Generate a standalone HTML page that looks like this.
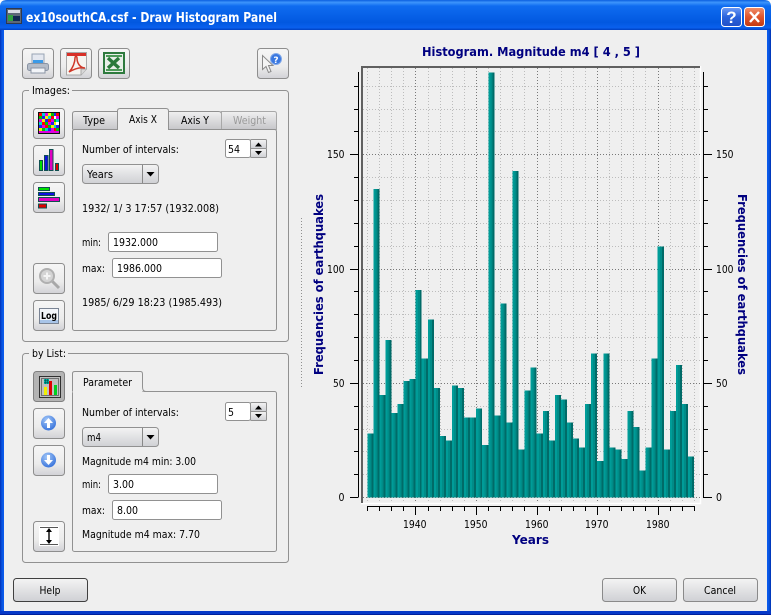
<!DOCTYPE html>
<html><head><meta charset="utf-8"><title>Draw Histogram Panel</title>
<style>
html,body{margin:0;padding:0;background:#fff;width:771px;height:615px;overflow:hidden}
svg{display:block}
text{font-family:"DejaVu Sans","Liberation Sans",sans-serif;font-size:11px;fill:#000}
.t{font-weight:bold;fill:#000080;font-size:12.5px}
.c{text-anchor:middle}
.e{text-anchor:end}
</style></head><body>
<svg width="771" height="615" viewBox="0 0 771 615" xmlns="http://www.w3.org/2000/svg">
<defs>
<linearGradient id="tb" x1="0" y1="0" x2="0" y2="1">
<stop offset="0" stop-color="#0a5fe0"/><stop offset=".08" stop-color="#3d95fb"/><stop offset=".2" stop-color="#0f6cf0"/><stop offset=".75" stop-color="#0258e0"/><stop offset=".92" stop-color="#0a60ee"/><stop offset="1" stop-color="#0040c0"/>
</linearGradient>
<linearGradient id="lf" x1="0" y1="0" x2="1" y2="0"><stop offset="0" stop-color="#0030b8"/><stop offset=".5" stop-color="#0855e0"/><stop offset="1" stop-color="#0a5cf0"/></linearGradient>
<linearGradient id="rf" x1="0" y1="0" x2="1" y2="0"><stop offset="0" stop-color="#0a5cf0"/><stop offset=".5" stop-color="#0855e0"/><stop offset="1" stop-color="#0030b0"/></linearGradient>
<linearGradient id="btn" x1="0" y1="0" x2="0" y2="1"><stop offset="0" stop-color="#f6f6f6"/><stop offset=".6" stop-color="#ececec"/><stop offset="1" stop-color="#d2d2d6"/></linearGradient>
<linearGradient id="bt2" x1="0" y1="0" x2="0" y2="1"><stop offset="0" stop-color="#f4f4f4"/><stop offset="1" stop-color="#cfd0d4"/></linearGradient>
<linearGradient id="tab" x1="0" y1="0" x2="0" y2="1"><stop offset="0" stop-color="#f0f0f0"/><stop offset="1" stop-color="#c6c6ca"/></linearGradient>
<linearGradient id="bar" x1="0" y1="0" x2="1" y2="0">
<stop offset="0" stop-color="#009c98"/><stop offset=".34" stop-color="#009c98"/><stop offset=".34" stop-color="#008c88"/><stop offset=".67" stop-color="#008c88"/><stop offset=".67" stop-color="#006b68"/><stop offset="1" stop-color="#006b68"/>
</linearGradient>
<linearGradient id="hb" x1="0" y1="0" x2="0" y2="1"><stop offset="0" stop-color="#6f9cf6"/><stop offset=".5" stop-color="#2a63dc"/><stop offset="1" stop-color="#2050c8"/></linearGradient>
<linearGradient id="cb" x1="0" y1="0" x2="0" y2="1"><stop offset="0" stop-color="#f0906c"/><stop offset=".5" stop-color="#e0552c"/><stop offset="1" stop-color="#c03810"/></linearGradient>
<radialGradient id="ball" cx=".4" cy=".3" r=".8"><stop offset="0" stop-color="#a4c8f8"/><stop offset="1" stop-color="#2c6ad8"/></radialGradient>
</defs>

<!-- window -->
<rect width="771" height="615" fill="#efefef"/>
<path d="M0 30V6Q0 0 7 0H764Q771 0 771 6V30Z" fill="url(#tb)"/>
<path d="M0 0H5Q1 0 0 5ZM771 0H766Q770 0 771 5Z" fill="#fff"/>
<rect x="0" y="30" width="4" height="585" fill="url(#lf)"/>
<rect x="767" y="30" width="4" height="585" fill="url(#rf)"/>
<rect x="0" y="611" width="771" height="4" fill="#0639c8"/>
<rect x="0" y="614" width="771" height="1" fill="#00209c"/>

<!-- title icon -->
<rect x="6.500" y="8.500" width="15" height="15" fill="#5c6878" stroke="#30384c"/>
<rect x="8" y="10" width="12" height="3" fill="#d8dce4"/>
<rect x="8" y="15" width="5" height="6" fill="#30a040"/>
<rect x="13" y="16" width="7" height="5" fill="#102850"/>
<text x="26" y="22" style="font-size:13.500px;font-weight:bold;fill:#fff" textLength="251" lengthAdjust="spacingAndGlyphs">ex10southCA.csf - Draw Histogram Panel</text>

<!-- caption buttons -->
<rect x="721.500" y="7.500" width="20" height="19" rx="3" fill="url(#hb)" stroke="#fff"/>
<text x="731.500" y="23" class="c" style="font-size:17px;font-weight:bold;fill:#fff;font-family:'Liberation Sans',sans-serif">?</text>
<rect x="744.500" y="7.500" width="20" height="19" rx="3" fill="url(#cb)" stroke="#fff"/>
<path d="M750 12L759 22M759 12L750 22" stroke="#fff" stroke-width="2.400" fill="none"/>

<!-- top toolbar -->
<g fill="url(#btn)" stroke="#8e8e8e">
<rect x="22.500" y="48.500" width="31" height="30" rx="3"/>
<rect x="60.500" y="48.500" width="31" height="30" rx="3"/>
<rect x="98.500" y="48.500" width="31" height="30" rx="3"/>
<rect x="257.500" y="48.500" width="31" height="30" rx="3"/>
</g>
<!-- printer -->
<rect x="32" y="54" width="12" height="9" fill="#e4e8f0" stroke="#98a4b4"/>
<rect x="33" y="60" width="10" height="4" fill="#3a9ae8"/>
<rect x="27.500" y="63.500" width="21" height="7" rx="2" fill="#b4bcc8" stroke="#8a94a4"/>
<rect x="31" y="68" width="14" height="5" fill="#f2f4f8" stroke="#8a94a4"/>
<!-- pdf -->
<path d="M66.500 52.500H86.500V69L81 75H66.500Z" fill="#f6f4f0" stroke="#a8a8a8"/>
<rect x="67" y="53" width="19" height="3" fill="#d83028"/>
<path d="M81 75V69H86.500" fill="#d8d8d8" stroke="#a8a8a8"/>
<path d="M69 72C73 68 75 62 75 58C75 56 77 56 77 58C77 63 80 68 85 68C80 67 74 69 69 72Z" fill="none" stroke="#d03828" stroke-width="1.500"/>
<!-- excel -->
<rect x="104" y="53" width="20" height="20" fill="#e8efe8" stroke="#2e7a3e" stroke-width="2"/>
<rect x="106" y="55" width="16" height="2" fill="#4c9a58"/>
<rect x="106" y="69" width="16" height="2" fill="#4c9a58"/>
<path d="M108 58L119 68M119 58L108 68" stroke="#2a7a3a" stroke-width="3.400" fill="none"/>
<!-- help cursor -->
<path d="M262.500 55.500V69.500L266 66.500L268.500 72.500L271 71.500L268.500 65.500H273Z" fill="#f4f4f4" stroke="#8a8a8a"/>
<circle cx="276" cy="59" r="5.500" fill="#3a78e0" stroke="#80a8e8"/>
<text x="276" y="63" class="c" style="font-size:9px;font-weight:bold;fill:#fff">?</text>

<!-- group: images -->
<rect x="22.500" y="90.500" width="266" height="251" rx="3" fill="none" stroke="#919191"/>
<rect x="29" y="85" width="43" height="10" fill="#efefef"/>
<text x="32" y="94" textLength="38" lengthAdjust="spacingAndGlyphs">Images:</text>

<g fill="url(#btn)" stroke="#8e8e8e">
<rect x="33.500" y="108.500" width="31" height="30" rx="3"/>
<rect x="33.500" y="145.500" width="31" height="30" rx="3"/>
<rect x="33.500" y="182.500" width="31" height="30" rx="3"/>
<rect x="33.500" y="263.500" width="31" height="30" rx="3"/>
<rect x="33.500" y="300.500" width="31" height="30" rx="3"/>
</g>
<!-- checker icon -->
<rect x="38" y="112" width="22" height="22" fill="#101010"/>
<g shape-rendering="crispEdges">
<rect x="39" y="113" width="3" height="3" fill="#f00"/><rect x="42" y="113" width="3" height="3" fill="#00d0d0"/><rect x="45" y="113" width="3" height="3" fill="#e000e0"/><rect x="48" y="113" width="3" height="3" fill="#f0f000"/><rect x="51" y="113" width="3" height="3" fill="#00c000"/><rect x="54" y="113" width="2" height="3" fill="#2020f0"/><rect x="56" y="113" width="3" height="3" fill="#f00"/>
<rect x="39" y="116" width="3" height="3" fill="#00c000"/><rect x="42" y="116" width="3" height="3" fill="#2020f0"/><rect x="45" y="116" width="3" height="3" fill="#f0f000"/><rect x="48" y="116" width="3" height="3" fill="#00d0d0"/><rect x="51" y="116" width="3" height="3" fill="#f00"/><rect x="54" y="116" width="2" height="3" fill="#fff"/><rect x="56" y="116" width="3" height="3" fill="#e000e0"/>
<rect x="39" y="119" width="3" height="3" fill="#e000e0"/><rect x="42" y="119" width="3" height="3" fill="#f0f000"/><rect x="45" y="119" width="3" height="3" fill="#2020f0"/><rect x="48" y="119" width="3" height="3" fill="#f00"/><rect x="51" y="119" width="3" height="3" fill="#e000e0"/><rect x="54" y="119" width="2" height="3" fill="#00c000"/><rect x="56" y="119" width="3" height="3" fill="#00d0d0"/>
<rect x="39" y="122" width="3" height="3" fill="#00d0d0"/><rect x="42" y="122" width="3" height="3" fill="#f00"/><rect x="45" y="122" width="3" height="3" fill="#00c000"/><rect x="48" y="122" width="3" height="3" fill="#e000e0"/><rect x="51" y="122" width="3" height="3" fill="#2020f0"/><rect x="54" y="122" width="2" height="3" fill="#f0f000"/><rect x="56" y="122" width="3" height="3" fill="#fff"/>
<rect x="39" y="125" width="3" height="3" fill="#2020f0"/><rect x="42" y="125" width="3" height="3" fill="#e000e0"/><rect x="45" y="125" width="3" height="3" fill="#f00"/><rect x="48" y="125" width="3" height="3" fill="#00c000"/><rect x="51" y="125" width="3" height="3" fill="#f0f000"/><rect x="54" y="125" width="2" height="3" fill="#00d0d0"/><rect x="56" y="125" width="3" height="3" fill="#2020f0"/>
<rect x="39" y="128" width="3" height="3" fill="#f0f000"/><rect x="42" y="128" width="3" height="3" fill="#00c000"/><rect x="45" y="128" width="3" height="3" fill="#00d0d0"/><rect x="48" y="128" width="3" height="3" fill="#2020f0"/><rect x="51" y="128" width="3" height="3" fill="#e000e0"/><rect x="54" y="128" width="2" height="3" fill="#f00"/><rect x="56" y="128" width="3" height="3" fill="#00c000"/>
<rect x="39" y="131" width="20" height="2" fill="#e000e0"/>
</g>
<!-- bar chart icon -->
<g stroke="#105050" stroke-width="1">
<rect x="39.500" y="160.500" width="3" height="10" fill="#00e000"/>
<rect x="44.500" y="155.500" width="3.500" height="15" fill="#1010e0"/>
<rect x="49.500" y="149.500" width="3.500" height="21" fill="#e000c0"/>
<rect x="55.500" y="163.500" width="3" height="7" fill="#e00000"/>
</g>
<!-- hbar icon -->
<g stroke="#105050" stroke-width="1" shape-rendering="crispEdges">
<rect x="38.500" y="187.500" width="11" height="3" fill="#00e000"/>
<rect x="38.500" y="192.500" width="16" height="3" fill="#1010e0"/>
<rect x="38.500" y="197.500" width="21" height="4" fill="#e000c0"/>
<rect x="38.500" y="204" width="8" height="4" fill="#e00000"/>
</g>
<!-- magnifier -->
<path d="M52 281L59 288" stroke="#a8a8a8" stroke-width="3"/>
<circle cx="47" cy="276" r="7" fill="#d4d4d4" stroke="#b0b0b0" stroke-width="2"/>
<path d="M43.500 276H50.500M47 272.500V279.500" stroke="#f4f4f4" stroke-width="2"/>
<!-- log -->
<rect x="39.500" y="308.500" width="19" height="15" fill="#f4f6fa" stroke="#7a8494"/>
<rect x="40" y="320" width="18" height="3" fill="#a8c4e8"/>
<text x="49" y="319" class="c" style="font-size:9.500px;font-weight:bold" textLength="16" lengthAdjust="spacingAndGlyphs">Log</text>

<!-- tabs images -->
<path d="M72.500 129.500V114Q72.500 111.500 75 111.500H118V129.500" fill="url(#tab)" stroke="#919191"/>
<path d="M168 111.500H218.500Q221.500 111.500 221.500 114V129.500H168Z" fill="url(#tab)" stroke="#919191"/>
<path d="M221.500 111.500H274.500Q276.500 111.500 276.500 114V129.500H221.500Z" fill="url(#tab)" stroke="#a8a8a8"/>
<rect x="72.500" y="129.500" width="204" height="201" rx="2" fill="#efefef" stroke="#919191"/>
<path d="M117.500 129.500V111Q117.500 108.500 120 108.500H166Q168.500 108.500 168.500 111V129" fill="#efefef" stroke="#919191"/>
<rect x="118" y="128" width="50" height="3" fill="#efefef"/>
<text x="83" y="124" textLength="22" lengthAdjust="spacingAndGlyphs">Type</text>
<text x="129" y="123" textLength="28" lengthAdjust="spacingAndGlyphs">Axis X</text>
<text x="181" y="124" textLength="28" lengthAdjust="spacingAndGlyphs">Axis Y</text>
<text x="233" y="124" style="fill:#9a9a9a" textLength="33" lengthAdjust="spacingAndGlyphs">Weight</text>

<text x="82" y="153" textLength="97" lengthAdjust="spacingAndGlyphs">Number of intervals:</text>
<!-- spin 54 -->
<rect x="225.500" y="139.500" width="25" height="18" rx="2" fill="#fff" stroke="#919191"/>
<text x="228" y="153" textLength="12" lengthAdjust="spacingAndGlyphs">54</text>
<rect x="250.500" y="139.500" width="16" height="9" rx="1" fill="url(#bt2)" stroke="#919191"/>
<rect x="250.500" y="148.500" width="16" height="9" rx="1" fill="url(#bt2)" stroke="#919191"/>
<path d="M255 146.500L258.500 142.500L262 146.500ZM255 151L258.500 155L262 151Z" fill="#000"/>
<!-- combo years -->
<rect x="82.500" y="164.500" width="76" height="19" rx="3" fill="url(#bt2)" stroke="#919191"/>
<path d="M142.500 165V183" stroke="#888"/>
<path d="M146.500 172H154.500L150.500 176.500Z" fill="#000"/>
<text x="87" y="178" textLength="26" lengthAdjust="spacingAndGlyphs">Years</text>

<text x="82" y="212" textLength="137" lengthAdjust="spacingAndGlyphs" xml:space="preserve">1932/ 1/ 3 17:57 (1932.008)</text>
<text x="82" y="246" textLength="19" lengthAdjust="spacingAndGlyphs">min:</text>
<rect x="108.500" y="232.500" width="109" height="19" rx="2" fill="#fff" stroke="#919191"/>
<text x="113" y="246" textLength="45" lengthAdjust="spacingAndGlyphs">1932.000</text>
<text x="82" y="272" textLength="23" lengthAdjust="spacingAndGlyphs">max:</text>
<rect x="112.500" y="258.500" width="109" height="19" rx="2" fill="#fff" stroke="#919191"/>
<text x="117" y="272" textLength="45" lengthAdjust="spacingAndGlyphs">1986.000</text>
<text x="82" y="306" textLength="140" lengthAdjust="spacingAndGlyphs">1985/ 6/29 18:23 (1985.493)</text>

<!-- group: by list -->
<rect x="22.500" y="353.500" width="266" height="209" rx="3" fill="none" stroke="#919191"/>
<rect x="29" y="348" width="39" height="10" fill="#efefef"/>
<text x="32" y="357" textLength="34" lengthAdjust="spacingAndGlyphs">by List:</text>

<rect x="33.500" y="371.500" width="31" height="30" rx="3" fill="#b4b4b4" stroke="#808080"/>
<g fill="url(#btn)" stroke="#8e8e8e">
<rect x="33.500" y="408.500" width="31" height="30" rx="3"/>
<rect x="33.500" y="445.500" width="31" height="30" rx="3"/>
<rect x="33.500" y="521.500" width="31" height="30" rx="3"/>
</g>
<!-- pressed chart icon -->
<rect x="39.500" y="376.500" width="21" height="21" fill="#c0c0c0" stroke="#303030"/>
<rect x="41.500" y="378.500" width="17" height="17" fill="none" stroke="#707070"/>
<rect x="44" y="379" width="5" height="5" fill="#00b8a8"/>
<path d="M45.500 379V384M47.500 379V384M44 380.500H49M44 382.500H49" stroke="#005050" stroke-width=".6"/>
<rect x="44" y="387" width="3" height="8" fill="#f0f000"/>
<rect x="49" y="381" width="3" height="14" fill="#e00000"/>
<rect x="54" y="385" width="3" height="10" fill="#00d020"/>
<!-- arrows -->
<circle cx="48.500" cy="423" r="7.500" fill="url(#ball)"/>
<path d="M48.500 418L44 423H47V428H50V423H53Z" fill="#fff"/>
<circle cx="48.500" cy="460" r="7.500" fill="url(#ball)"/>
<path d="M48.500 465L44 460H47V455H50V460H53Z" fill="#fff"/>
<!-- extent icon -->
<rect x="39" y="526" width="20" height="20" fill="#fff"/>
<path d="M40 527.500H58M40 544.500H58" stroke="#555"/>
<path d="M49 529V543" stroke="#000" stroke-width="1.400"/>
<path d="M46 532L49 528L52 532ZM46 540L49 544L52 540Z" fill="#000"/>

<rect x="72.500" y="391.500" width="204" height="160" rx="2" fill="#efefef" stroke="#919191"/>
<path d="M72.500 391.500V373.500Q72.500 371.500 75 371.500H140.500Q142.500 371.500 142.500 374V387Q142.500 391.500 146 391.500" fill="#efefef" stroke="#919191"/>
<rect x="73" y="389" width="69" height="4" fill="#efefef"/>
<text x="83" y="386" textLength="49" lengthAdjust="spacingAndGlyphs">Parameter</text>

<text x="82" y="416" textLength="97" lengthAdjust="spacingAndGlyphs">Number of intervals:</text>
<rect x="225.500" y="402.500" width="25" height="18" rx="2" fill="#fff" stroke="#919191"/>
<text x="228" y="416" textLength="6" lengthAdjust="spacingAndGlyphs">5</text>
<rect x="250.500" y="402.500" width="16" height="9" rx="1" fill="url(#bt2)" stroke="#919191"/>
<rect x="250.500" y="411.500" width="16" height="9" rx="1" fill="url(#bt2)" stroke="#919191"/>
<path d="M255 409.500L258.500 405.500L262 409.500ZM255 414L258.500 418L262 414Z" fill="#000"/>
<rect x="82.500" y="427.500" width="76" height="19" rx="3" fill="url(#bt2)" stroke="#919191"/>
<path d="M142.500 428V446" stroke="#888"/>
<path d="M146.500 435H154.500L150.500 439.500Z" fill="#000"/>
<text x="87" y="441" textLength="14" lengthAdjust="spacingAndGlyphs">m4</text>

<text x="82" y="465" textLength="114" lengthAdjust="spacingAndGlyphs">Magnitude m4 min: 3.00</text>
<text x="82" y="488" textLength="19" lengthAdjust="spacingAndGlyphs">min:</text>
<rect x="108.500" y="474.500" width="109" height="19" rx="2" fill="#fff" stroke="#919191"/>
<text x="113" y="488" textLength="21" lengthAdjust="spacingAndGlyphs">3.00</text>
<text x="82" y="514" textLength="23" lengthAdjust="spacingAndGlyphs">max:</text>
<rect x="112.500" y="500.500" width="109" height="19" rx="2" fill="#fff" stroke="#919191"/>
<text x="117" y="514" textLength="21" lengthAdjust="spacingAndGlyphs">8.00</text>
<text x="82" y="538" textLength="118" lengthAdjust="spacingAndGlyphs">Magnitude m4 max: 7.70</text>

<!-- dialog buttons -->
<rect x="13.500" y="578.500" width="74" height="23" rx="3" fill="url(#bt2)" stroke="#404040"/>
<text x="39.500" y="594" textLength="21" lengthAdjust="spacingAndGlyphs">Help</text>
<rect x="602.500" y="578.500" width="74" height="23" rx="3" fill="url(#bt2)" stroke="#8a8a8a"/>
<text x="633" y="594" textLength="13" lengthAdjust="spacingAndGlyphs">OK</text>
<rect x="683.500" y="578.500" width="74" height="23" rx="3" fill="url(#bt2)" stroke="#8a8a8a"/>
<text x="704" y="594" textLength="32" lengthAdjust="spacingAndGlyphs">Cancel</text>

<!-- splitter -->
<path d="M301.500 218V388" stroke="#909090" stroke-dasharray="1 2"/>

<!-- plot -->
<text x="422" y="56" class="t" textLength="218" lengthAdjust="spacingAndGlyphs" xml:space="preserve">Histogram. Magnitude m4 [ 4 , 5 ]</text>

<rect x="363" y="68" width="337" height="435" fill="#efefef"/>
<path d="M700.500 66V503.500H361" stroke="#fff" fill="none" stroke-width="1.500"/>
<!-- grid minor -->
<path stroke="#bcbcbc" stroke-dasharray="1 2" fill="none" d="M363 474.500H700M363 451.500H700M363 429.500H700M363 406.500H700M363 360.500H700M363 337.500H700M363 314.500H700M363 291.500H700M363 246.500H700M363 223.500H700M363 200.500H700M363 177.500H700M363 131.500H700M363 109.500H700M363 86.500H700M367.500 68V503M379.500 68V503M391.500 68V503M403.500 68V503M428.500 68V503M440.500 68V503M452.500 68V503M464.500 68V503M488.500 68V503M500.500 68V503M512.500 68V503M524.500 68V503M549.500 68V503M561.500 68V503M573.500 68V503M585.500 68V503M609.500 68V503M621.500 68V503M633.500 68V503M645.500 68V503M670.500 68V503M682.500 68V503M694.500 68V503"/>
<!-- grid major -->
<path stroke="#787878" stroke-dasharray="1 2" fill="none" d="M363 497.500H700M363 383.500H700M363 269.500H700M363 154.500H700M415.500 68V503M476.500 68V503M537.500 68V503M597.500 68V503M658.500 68V503"/>
<!-- bars -->
<g transform="translate(367.300,497.700) scale(6.050,-2.285)" fill="url(#bar)" shape-rendering="crispEdges">
<rect x="0" width="1" height="28"/><rect x="1" width="1" height="135"/><rect x="2" width="1" height="45"/><rect x="3" width="1" height="69"/><rect x="4" width="1" height="37"/><rect x="5" width="1" height="41"/>
<rect x="6" width="1" height="51"/><rect x="7" width="1" height="52"/><rect x="8" width="1" height="91"/><rect x="9" width="1" height="61"/><rect x="10" width="1" height="78"/><rect x="11" width="1" height="48"/>
<rect x="12" width="1" height="27"/><rect x="13" width="1" height="25"/><rect x="14" width="1" height="49"/><rect x="15" width="1" height="48"/><rect x="16" width="1" height="35"/><rect x="17" width="1" height="35"/>
<rect x="18" width="1" height="39"/><rect x="19" width="1" height="23"/><rect x="20" width="1" height="186"/><rect x="21" width="1" height="36"/><rect x="22" width="1" height="85"/><rect x="23" width="1" height="33"/>
<rect x="24" width="1" height="143"/><rect x="25" width="1" height="21"/><rect x="26" width="1" height="47"/><rect x="27" width="1" height="57"/><rect x="28" width="1" height="28"/><rect x="29" width="1" height="38"/>
<rect x="30" width="1" height="25"/><rect x="31" width="1" height="45"/><rect x="32" width="1" height="43"/><rect x="33" width="1" height="33"/><rect x="34" width="1" height="26"/><rect x="35" width="1" height="22"/>
<rect x="36" width="1" height="41"/><rect x="37" width="1" height="63"/><rect x="38" width="1" height="16"/><rect x="39" width="1" height="63"/><rect x="40" width="1" height="22"/><rect x="41" width="1" height="21"/>
<rect x="42" width="1" height="17"/><rect x="43" width="1" height="38"/><rect x="44" width="1" height="31"/><rect x="45" width="1" height="12"/><rect x="46" width="1" height="22"/><rect x="47" width="1" height="61"/>
<rect x="48" width="1" height="110"/><rect x="49" width="1" height="21"/><rect x="50" width="1" height="38"/><rect x="51" width="1" height="58"/><rect x="52" width="1" height="41"/><rect x="53" width="1" height="18"/>
</g>
<!-- frame -->
<rect x="361" y="66" width="2" height="437" fill="#606060"/>
<rect x="361" y="66" width="339" height="2" fill="#606060"/>

<!-- left axis -->
<path stroke="#000" fill="none" d="M358.500 72V497.500M354 474.500H358M354 451.500H358M354 429.500H358M354 406.500H358M354 360.500H358M354 337.500H358M354 314.500H358M354 291.500H358M354 246.500H358M354 223.500H358M354 200.500H358M354 177.500H358M354 131.500H358M354 109.500H358M354 86.500H358M350 497.500H358M350 383.500H358M350 269.500H358M350 154.500H358"/>
<text x="338.500" y="501" textLength="6" lengthAdjust="spacingAndGlyphs">0</text>
<text x="333" y="387" textLength="11.500" lengthAdjust="spacingAndGlyphs">50</text>
<text x="327" y="273" textLength="17.500" lengthAdjust="spacingAndGlyphs">100</text>
<text x="327" y="158" textLength="17.500" lengthAdjust="spacingAndGlyphs">150</text>
<!-- right axis -->
<path stroke="#000" fill="none" d="M703.500 72V497.500M703 474.500H708M703 451.500H708M703 429.500H708M703 406.500H708M703 360.500H708M703 337.500H708M703 314.500H708M703 291.500H708M703 246.500H708M703 223.500H708M703 200.500H708M703 177.500H708M703 131.500H708M703 109.500H708M703 86.500H708M703 497.500H712M703 383.500H712M703 269.500H712M703 154.500H712"/>
<text x="716" y="501" textLength="6" lengthAdjust="spacingAndGlyphs">0</text>
<text x="716" y="387" textLength="11.500" lengthAdjust="spacingAndGlyphs">50</text>
<text x="716" y="273" textLength="17.500" lengthAdjust="spacingAndGlyphs">100</text>
<text x="716" y="158" textLength="17.500" lengthAdjust="spacingAndGlyphs">150</text>
<!-- bottom axis -->
<path stroke="#000" fill="none" d="M367 506.500H695M367.500 507V511M379.500 507V511M391.500 507V511M403.500 507V511M428.500 507V511M440.500 507V511M452.500 507V511M464.500 507V511M488.500 507V511M500.500 507V511M512.500 507V511M524.500 507V511M549.500 507V511M561.500 507V511M573.500 507V511M585.500 507V511M609.500 507V511M621.500 507V511M633.500 507V511M645.500 507V511M670.500 507V511M682.500 507V511M694.500 507V511M415.500 507V515M476.500 507V515M537.500 507V515M597.500 507V515M658.500 507V515"/>
<text x="403" y="528" textLength="23.500" lengthAdjust="spacingAndGlyphs">1940</text>
<text x="464" y="528" textLength="23.500" lengthAdjust="spacingAndGlyphs">1950</text>
<text x="525" y="528" textLength="23.500" lengthAdjust="spacingAndGlyphs">1960</text>
<text x="585" y="528" textLength="23.500" lengthAdjust="spacingAndGlyphs">1970</text>
<text x="646" y="528" textLength="23.500" lengthAdjust="spacingAndGlyphs">1980</text>
<text x="512" y="544" class="t" textLength="37" lengthAdjust="spacingAndGlyphs">Years</text>
<text transform="translate(323,375) rotate(-90)" class="t" textLength="181" lengthAdjust="spacingAndGlyphs">Frequencies of earthquakes</text>
<text transform="translate(738,194) rotate(90)" class="t" textLength="181" lengthAdjust="spacingAndGlyphs">Frequencies of earthquakes</text>
</svg>
</body></html>
